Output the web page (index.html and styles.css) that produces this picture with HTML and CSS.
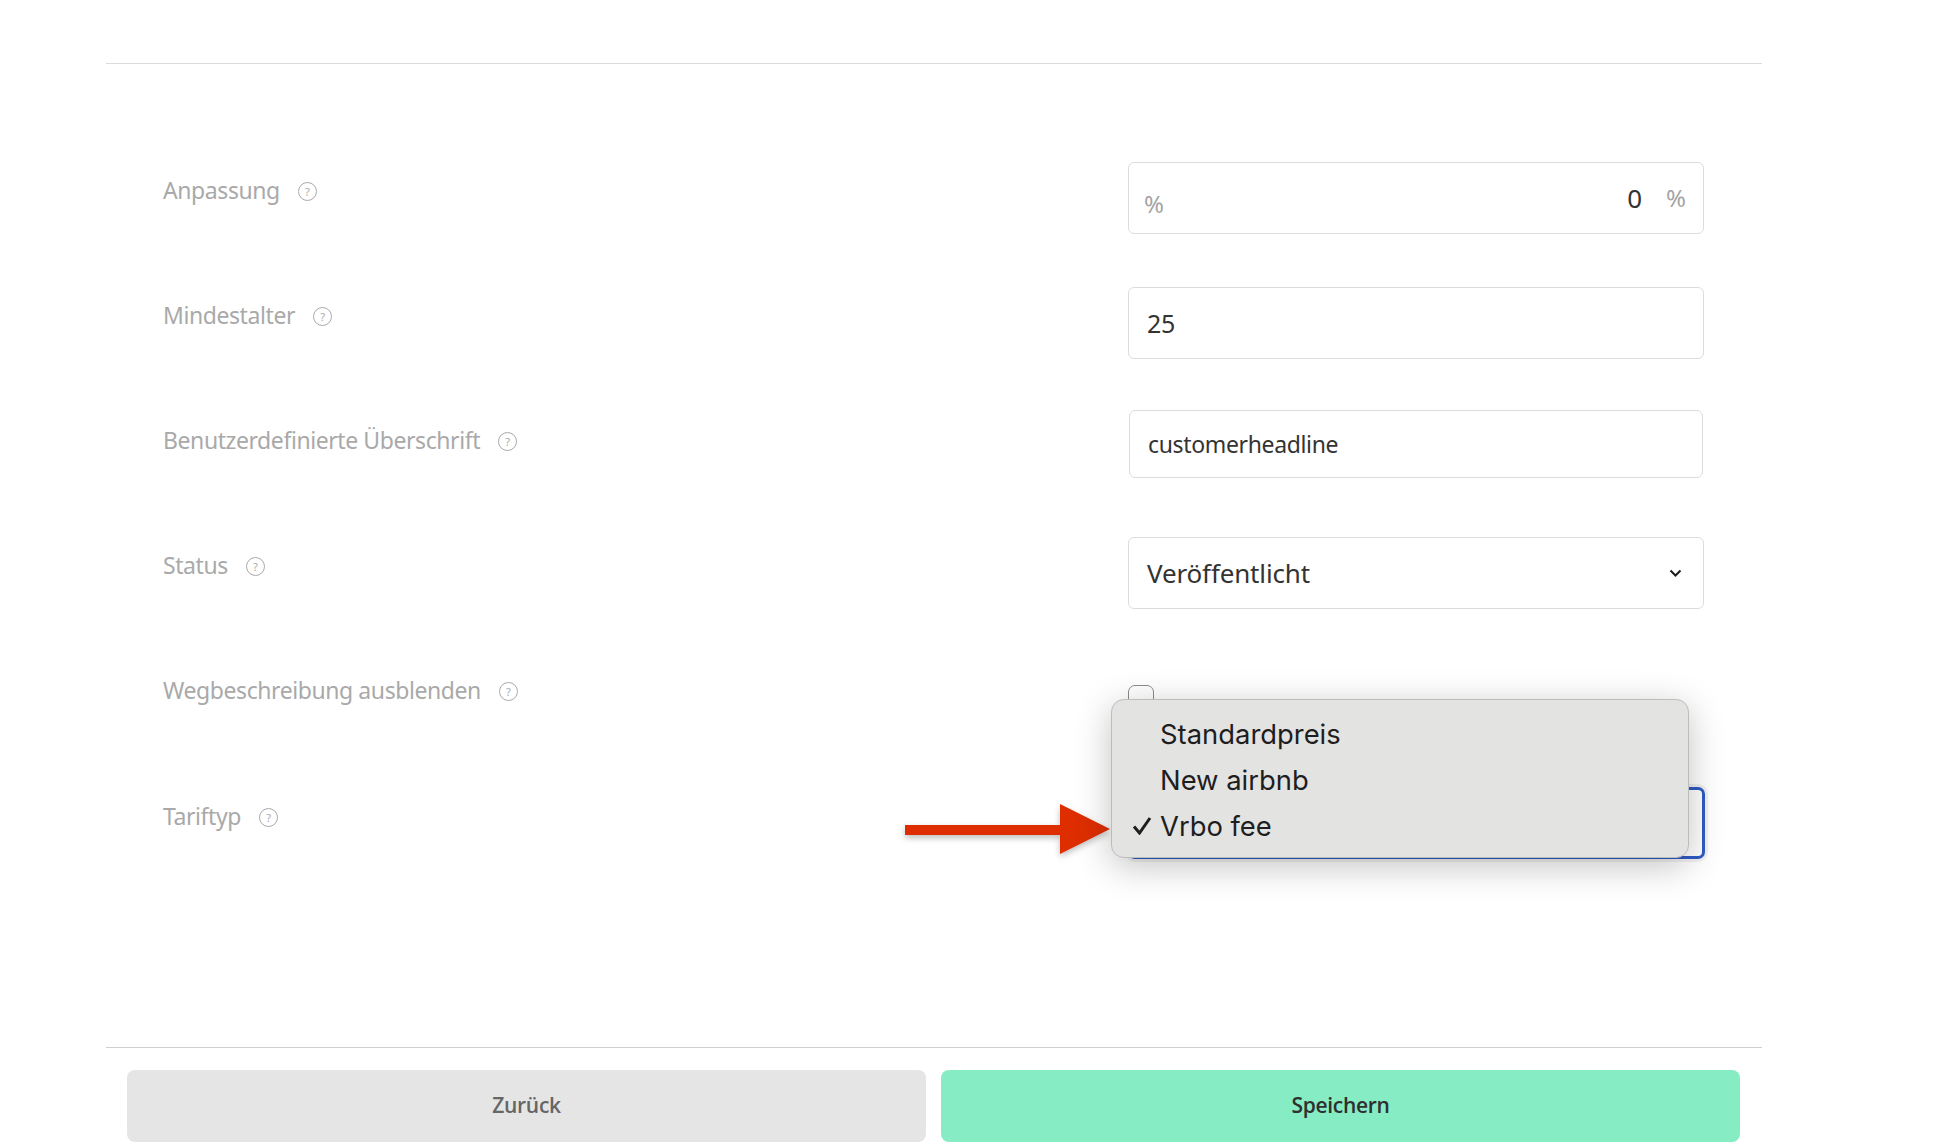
FILE: index.html
```html
<!DOCTYPE html>
<html lang="de">
<head>
<meta charset="utf-8">
<title>Tarif</title>
<link rel="stylesheet" href="styles.css">
</head>
<body>
<main class="page">
  <form class="form">
    <div class="row">
      <div class="label"><span>Anpassung</span><span class="help">?</span></div>
      <div class="control">
        <div class="field field-percent"><span class="unit unit-left">%</span><span class="value-right">0</span><span class="unit unit-right">%</span></div>
      </div>
    </div>
    <div class="row">
      <div class="label"><span>Mindestalter</span><span class="help">?</span></div>
      <div class="control"><div class="field"><span class="value">25</span></div></div>
    </div>
    <div class="row">
      <div class="label"><span>Benutzerdefinierte Überschrift</span><span class="help">?</span></div>
      <div class="control"><div class="field field-small"><span class="value value-small">customerheadline</span></div></div>
    </div>
    <div class="row">
      <div class="label"><span>Status</span><span class="help">?</span></div>
      <div class="control">
        <div class="field field-select"><span class="value value-large">Veröffentlicht</span>
          <svg class="chevron" width="13" height="9" viewBox="0 0 13 9"><path d="M1.5 1.5 L6.5 6.5 L11.5 1.5" fill="none" stroke="#1c1c1c" stroke-width="2"/></svg>
        </div>
      </div>
    </div>
    <div class="row">
      <div class="label"><span>Wegbeschreibung ausblenden</span><span class="help">?</span></div>
      <div class="control"><span class="checkbox"></span></div>
    </div>
    <div class="row">
      <div class="label label-last"><span>Tariftyp</span><span class="help">?</span></div>
      <div class="control">
        <div class="field field-focus"></div>
        <svg class="arrow" width="206" height="50" viewBox="0 0 206 50"><path d="M0 21 H155 V0 L205 25 L155 50 V31 H0 Z" fill="#de2e00"/></svg>
        <ul class="menu">
          <li>Standardpreis</li>
          <li>New airbnb</li>
          <li><svg class="check" width="20" height="19" viewBox="0 0 20 19"><path d="M2 10.5 L7.5 17 L18 2" fill="none" stroke="#1e1e1e" stroke-width="3"/></svg>Vrbo fee</li>
        </ul>
      </div>
    </div>
  </form>
  <footer class="footer">
    <button type="button" class="btn btn-back">Zurück</button>
    <button type="button" class="btn btn-save">Speichern</button>
  </footer>
</main>
</body>
</html>
```
FILE: styles.css
```css
* { box-sizing: border-box; }
html, body { margin: 0; padding: 0; height: 1148px; overflow: hidden; background: #fff; }
body { font-family: "Noto Sans", "Open Sans", sans-serif; }

.page { width: 1656px; margin: 63px 0 0 106px; border-top: 1px solid #dcdcdc; }
.form { height: 983px; padding: 98px 0 0 57px; }

.row { display: flex; height: 125px; }
.label { width: 965px; display: flex; align-items: center; height: 56px; color: #a9a9a9; font-size: 23px; letter-spacing: -0.42px; }
.label-last { height: 58px; }
.help { width: 19px; height: 19px; margin-left: 18px; margin-top: 2px; border: 1px solid #a9a9a9; border-radius: 50%; font-size: 11px; line-height: 17px; text-align: center; letter-spacing: 0; }

.control { position: relative; width: 576px; }
.field { display: flex; align-items: center; height: 72px; padding: 0 18px; border: 1px solid #dcdcdc; border-radius: 6px; background: #fff; color: #333; }
.value { font-size: 25px; letter-spacing: -0.4px; }
.value-small { font-size: 23px; letter-spacing: -0.35px; }
.value-large { font-size: 26px; letter-spacing: -0.15px; }
.field-small { height: 68px; margin: -2px 1px 0; }
.field-select { justify-content: space-between; padding-right: 21px; }

.field-percent { padding: 0 17px 0 15px; }
.unit { color: #a3a3a3; font-size: 24px; }
.unit-left { margin-top: 10px; }
.value-right { margin-left: auto; font-size: 26px; color: #333; }
.unit-right { margin-left: 24px; margin-top: -1px; }

.checkbox { display: block; width: 26px; height: 26px; margin-top: 23px; border: 1px solid #8a8a8a; border-radius: 7px; background: #fff; }

.field-focus { height: 72px; margin-right: -1px; border: 3px solid #2f5bc4; border-radius: 7px; box-shadow: 0 0 0 3px #f1f1f1; }

.menu { position: absolute; left: -17px; top: -88px; width: 578px; height: 159px; margin: 0; padding: 11px 0 0 48px; list-style: none; background: #e3e3e2; border: 1px solid #bdbdbd; border-radius: 13px; box-shadow: 0 8px 36px rgba(0,0,0,0.24); color: #1e1e1e; font-family: Inter, "Noto Sans", sans-serif; font-size: 27.4px; letter-spacing: 0; line-height: 46px; }
.menu li { position: relative; }
.check { position: absolute; left: -28px; top: 13px; }

.arrow { position: absolute; left: -223px; top: 17px; overflow: visible; filter: drop-shadow(0 3px 3px rgba(0,0,0,0.25)); }

.footer { display: flex; gap: 15px; padding: 22px 22px 0 21px; border-top: 1px solid #d0d0d0; }
.btn { flex: 1; height: 72px; padding-bottom: 3px; border: 0; border-radius: 8px; font-family: "Open Sans", sans-serif; font-size: 21px; font-weight: 600; letter-spacing: -0.3px; }
.btn-back { background: #e5e5e5; color: #666; }
.btn-save { background: #85ecc3; color: #2f2f2f; }
```
